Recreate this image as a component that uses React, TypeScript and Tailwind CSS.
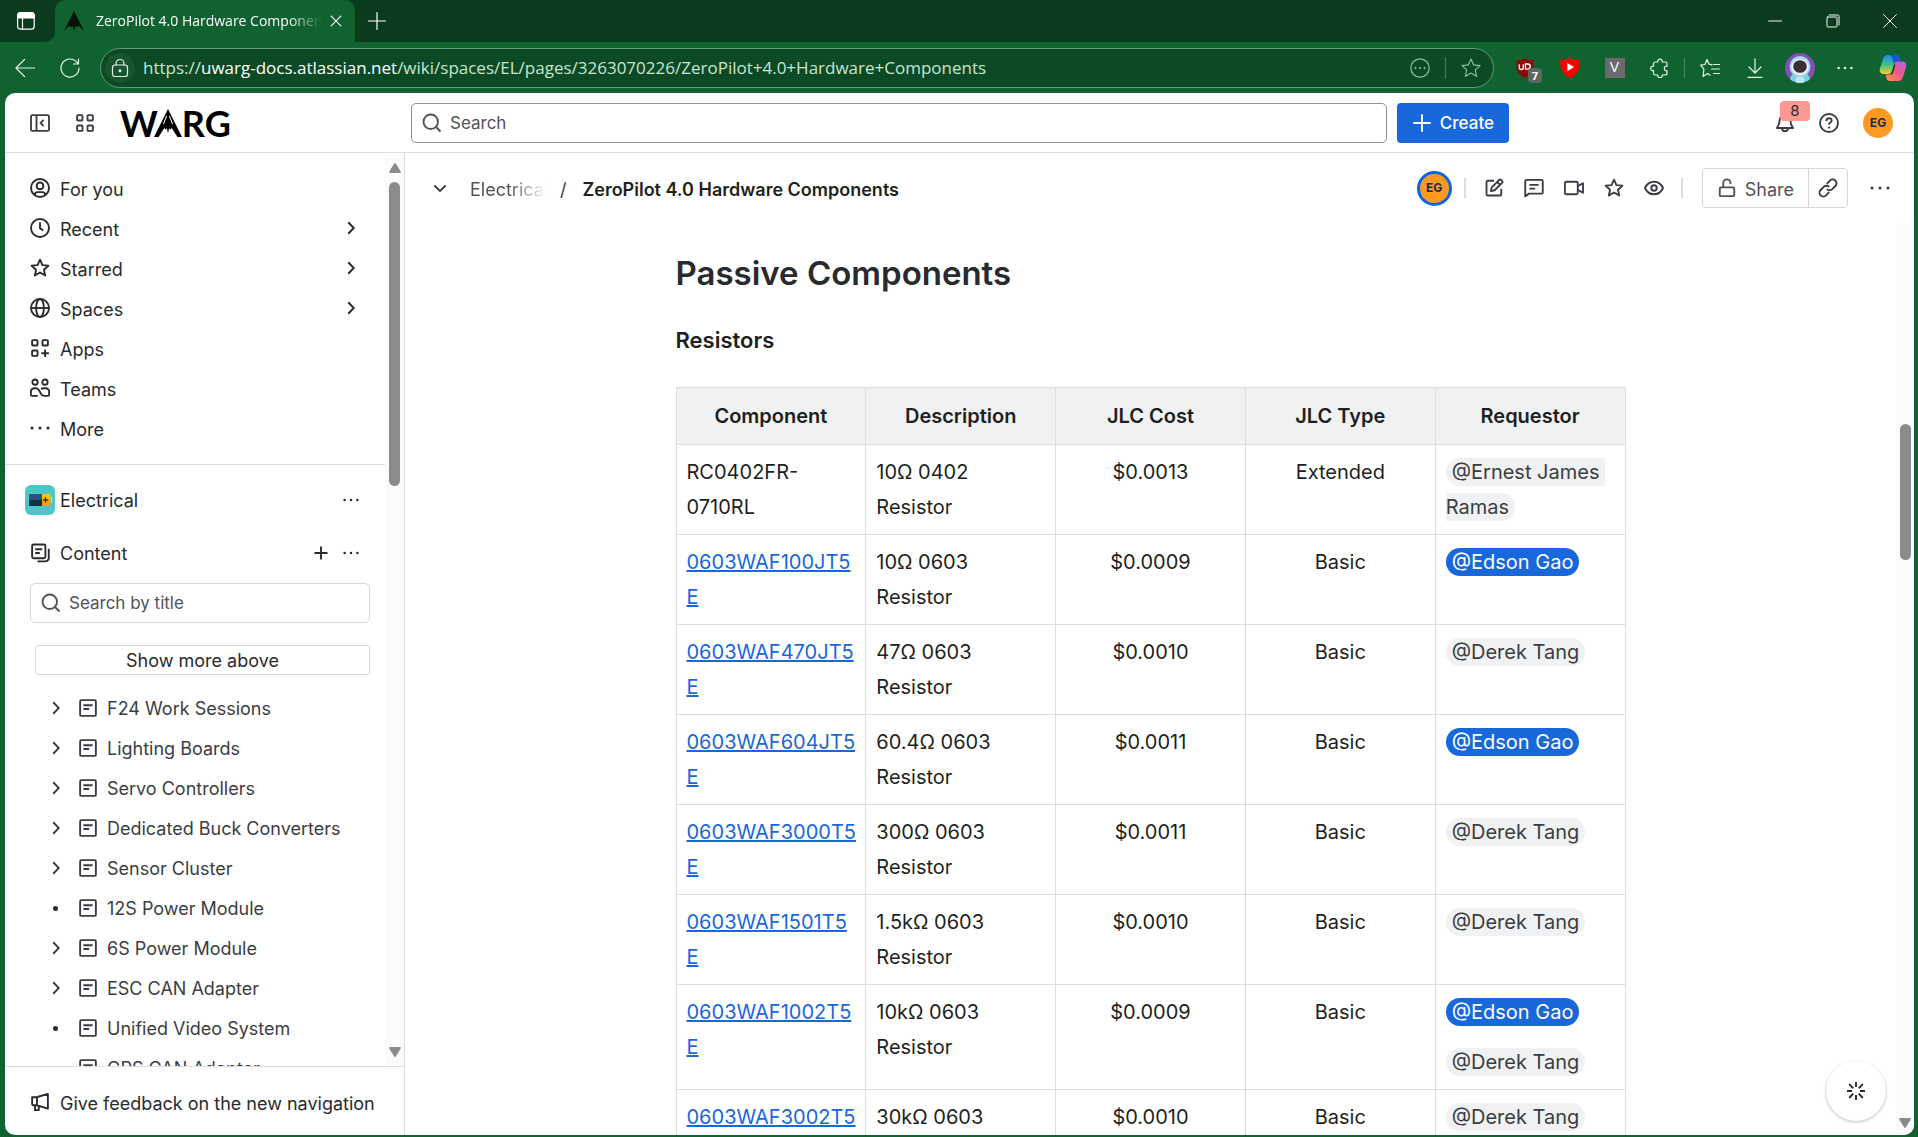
import type { ReactNode } from "react";

const STAR = "M8 1.3l1.95 4.35 4.75.5-3.55 3.2 1 4.7L8 11.65l-4.15 2.4 1-4.7L1.3 6.15l4.75-.5z";

function Icon({ children, size = "size-5", label }: { children: ReactNode; size?: string; label?: string }) {
  return (
    <svg
      viewBox="0 0 16 16"
      className={`${size} shrink-0`}
      fill="none"
      stroke="currentColor"
      strokeWidth="1.5"
      role={label ? "img" : undefined}
      aria-label={label}
      aria-hidden={label ? undefined : true}
    >
      {children}
    </svg>
  );
}

function Thin({ children, size = "size-5" }: { children: ReactNode; size?: string }) {
  return (
    <svg viewBox="0 0 20 20" className={`${size} shrink-0`} fill="none" stroke="currentColor" strokeWidth="1.2" strokeLinecap="round" strokeLinejoin="round" aria-hidden>
      {children}
    </svg>
  );
}

const Dots = ({ size = "size-5" }: { size?: string }) => (
  <Icon size={size}>
    <g fill="currentColor" stroke="none">
      <circle cx="1.6" cy="8" r="1.25" />
      <circle cx="8" cy="8" r="1.25" />
      <circle cx="14.4" cy="8" r="1.25" />
    </g>
  </Icon>
);

const ChevronRight = () => (
  <Icon>
    <path d="M5.8 3.4L10.2 8l-4.4 4.6" />
  </Icon>
);

const SearchIcon = () => (
  <Icon>
    <circle cx="7" cy="7" r="5.8" />
    <path d="M11.2 11.2l3.6 3.6" />
  </Icon>
);

const PageIcon = () => (
  <Icon>
    <rect x="1.7" y="1.7" width="12.6" height="12.6" rx="1" />
    <path d="M4.3 5.8h7.4M4.3 8.8h4.6" />
  </Icon>
);

const StarIcon = () => (
  <Icon>
    <path d={STAR} strokeLinejoin="round" />
  </Icon>
);

const navItems: { label: string; chevron?: boolean; icon: ReactNode }[] = [
  {
    label: "For you",
    icon: (
      <Icon>
        <circle cx="8" cy="8" r="7.2" />
        <circle cx="8" cy="6.3" r="2.7" />
        <path d="M3.8 13.6c.1-1.6.9-2.3 2.3-2.3h3.8c1.4 0 2.2.7 2.3 2.3" />
      </Icon>
    ),
  },
  {
    label: "Recent",
    chevron: true,
    icon: (
      <Icon>
        <circle cx="8" cy="8" r="7.2" />
        <path d="M8 3.3v4.9l2.5 1.7" />
      </Icon>
    ),
  },
  { label: "Starred", chevron: true, icon: <StarIcon /> },
  {
    label: "Spaces",
    chevron: true,
    icon: (
      <Icon>
        <circle cx="8" cy="8" r="7.2" />
        <ellipse cx="8" cy="8" rx="3.1" ry="7.2" />
        <path d="M.8 8h14.4" />
      </Icon>
    ),
  },
  {
    label: "Apps",
    icon: (
      <Icon>
        <rect x="1.7" y="1.7" width="4.3" height="4.3" rx=".6" />
        <rect x="10" y="1.7" width="4.3" height="4.3" rx=".6" />
        <rect x="1.7" y="10" width="4.3" height="4.3" rx=".6" />
        <path d="M12.1 9.2v6M9.1 12.2h6" />
      </Icon>
    ),
  },
  {
    label: "Teams",
    icon: (
      <Icon>
        <circle cx="4" cy="3.3" r="2.1" />
        <circle cx="12" cy="3.3" r="2.1" />
        <path d="M6.2 14.3H1.7a1 1 0 01-1-1V11a2.8 2.8 0 012.8-2.8h1.2c1.1 0 2 .6 2.5 1.600l1.700 3c.5.900 1.300 1.500 2.400 1.500h3a1 1 0 001-1V11a2.800 2.800 0 00-2.800-2.800H11c-.8 0-1.500.3-2 .9" />
      </Icon>
    ),
  },
  { label: "More", icon: <Dots /> },
];

const treeItems = [
  { label: "F24 Work Sessions", leaf: false },
  { label: "Lighting Boards", leaf: false },
  { label: "Servo Controllers", leaf: false },
  { label: "Dedicated Buck Converters", leaf: false },
  { label: "Sensor Cluster", leaf: false },
  { label: "12S Power Module", leaf: true },
  { label: "6S Power Module", leaf: false },
  { label: "ESC CAN Adapter", leaf: false },
  { label: "Unified Video System", leaf: true },
  { label: "GPS CAN Adapter", leaf: true },
];

const rows = [
  { part: "RC0402FR-0710RL", link: false, desc: "10Ω 0402 Resistor", cost: "$0.0013", type: "Extended", who: ["Ernest James Ramas"] },
  { part: "0603WAF100JT5E", link: true, desc: "10Ω 0603 Resistor", cost: "$0.0009", type: "Basic", who: ["Edson Gao"] },
  { part: "0603WAF470JT5E", link: true, desc: "47Ω 0603 Resistor", cost: "$0.0010", type: "Basic", who: ["Derek Tang"] },
  { part: "0603WAF604JT5E", link: true, desc: "60.4Ω 0603 Resistor", cost: "$0.0011", type: "Basic", who: ["Edson Gao"] },
  { part: "0603WAF3000T5E", link: true, desc: "300Ω 0603 Resistor", cost: "$0.0011", type: "Basic", who: ["Derek Tang"] },
  { part: "0603WAF1501T5E", link: true, desc: "1.5kΩ 0603 Resistor", cost: "$0.0010", type: "Basic", who: ["Derek Tang"] },
  { part: "0603WAF1002T5E", link: true, desc: "10kΩ 0603 Resistor", cost: "$0.0009", type: "Basic", who: ["Edson Gao", "Derek Tang"] },
  { part: "0603WAF3002T5E", link: true, desc: "30kΩ 0603 Resistor", cost: "$0.0010", type: "Basic", who: ["Derek Tang"] },
];

const columns = ["Component", "Description", "JLC Cost", "JLC Type", "Requestor"];

function Mention({ name }: { name: string }) {
  const self = name === "Edson Gao";
  return (
    <a
      href="#"
      className={`rounded-[20px] px-1.5 py-0.5 whitespace-pre-wrap ${self ? "bg-[#1868db] text-white" : "bg-[#f0f1f2] text-[#3b3d42]"}`}
    >
      @{name}
    </a>
  );
}

function TitleBar() {
  return (
    <div className="flex h-[42px] items-stretch bg-[#106230] text-white">
      <div className="flex w-[55px] items-center justify-center rounded-br-[10px] bg-[#0b3b1d]">
        <button aria-label="Tab actions menu" className="mr-1 flex">
          <Thin>
            <rect x="1.6" y="1.6" width="16.6" height="16.6" rx="3" />
            <path d="M1.6 4.6a3 3 0 013-3h10.6a3 3 0 013 3V7H1.6z" fill="currentColor" />
            <path d="M6.5 7v11" />
          </Thin>
        </button>
      </div>
      <div className="flex min-w-0 flex-1 bg-[#0b3b1d]">
        <div className="flex w-[300px] items-center rounded-t-[10px] bg-[#106230] pl-[9px]">
          <svg viewBox="0 0 20 20" className="size-5 shrink-0" aria-hidden>
            <path d="M10 0L20 20 14.5 14.5 12.8 16.5 11.5 15 10 20 8.5 15 7.2 16.5 5.5 14.5 0 20z" fill="#04120a" />
          </svg>
          <span className="ml-3 h-6 w-[226px] overflow-hidden mask-r-from-85% font-['Open_Sans','Noto_Sans',sans-serif] text-[14px] leading-6 whitespace-nowrap">
            ZeroPilot 4.0 Hardware Components
          </span>
          <button aria-label="Close tab" className="ml-1.5 flex">
            <Thin size="size-4">
              <path d="M4 4l12 12M16 4L4 16" strokeWidth="1.5" />
            </Thin>
          </button>
        </div>
        <button aria-label="New tab" className="ml-3 flex items-center">
          <Thin>
            <path d="M10 1.5v17M1.5 10h17" />
          </Thin>
        </button>
        <div className="ml-auto flex">
          <button aria-label="Minimize" className="flex w-[58px] items-center justify-center">
            <Thin size="size-4"><path d="M2 10h16" /></Thin>
          </button>
          <button aria-label="Restore" className="flex w-[58px] items-center justify-center">
            <Thin size="size-4">
              <rect x="2.5" y="5" width="12.5" height="12.5" rx="1" />
              <path d="M5 2.5h11a1.5 1.5 0 011.5 1.5v11" />
            </Thin>
          </button>
          <button aria-label="Close" className="flex w-14 items-center justify-center">
            <Thin size="size-4"><path d="M2 2l16 16M18 2L2 18" /></Thin>
          </button>
        </div>
      </div>
    </div>
  );
}

const toolCell = "flex w-[45px] shrink-0 items-center justify-center";

function AddressBar() {
  return (
    <div className="flex h-[51px] items-center text-[#e4f3e8]">
      <button aria-label="Back" className="ml-[15px] flex">
        <Thin><path d="M9.5 1.500L1 10l8.500 8.500M1 10h18.500" /></Thin>
      </button>
      <button aria-label="Refresh" className="ml-[25px] flex">
        <Thin>
          <path d="M19 10a9 9 0 11-3.500-7.100L18 5.500M18.500 1v5h-5" />
        </Thin>
      </button>
      <div className="ml-5 flex h-10 min-w-0 flex-1 items-center rounded-full border border-[#5f9a72] bg-[#0c4a25] pl-1">
        <button aria-label="View site information" className="flex size-[30px] shrink-0 items-center justify-center rounded-full bg-[#18552f]">
          <Thin>
            <rect x="2.5" y="7" width="15" height="11.5" rx="2.5" />
            <path d="M6 7V5.500a4 4 0 018 0V7" />
            <circle cx="10" cy="12.7" r=".9" fill="currentColor" />
          </Thin>
        </button>
        <div className="ml-2 min-w-0 flex-1 overflow-hidden font-['Open_Sans','Noto_Sans',sans-serif] text-[17px] leading-6 whitespace-nowrap text-[#c9e6d0]">
          https://<span className="text-white">uwarg-docs.atlassian.net</span>/wiki/spaces/EL/pages/3263070226/ZeroPilot+4.0+Hardware+Components
        </div>
        <button aria-label="Page actions" className="flex text-[#8fbd9d]">
          <Thin>
            <circle cx="10" cy="10" r="9.2" />
            <g fill="currentColor" stroke="none">
              <circle cx="5.5" cy="10" r="1" />
              <circle cx="10" cy="10" r="1" />
              <circle cx="14.5" cy="10" r="1" />
            </g>
          </Thin>
        </button>
        <span className="mx-[15px] h-[22px] w-px bg-[#4b7f4f]" />
        <button aria-label="Add to favorites" className="mr-3 flex text-[#8fbd9d]">
          <Thin><path d="M10 1l2.700 5.900 6.300.7-4.700 4.300 1.300 6.400L10 15.100l-5.600 3.200 1.300-6.400L1 7.600l6.300-.7z" /></Thin>
        </button>
      </div>
      <div className="ml-2 flex h-full items-center">
        <button aria-label="uBlock Origin, 7 blocked" className={`${toolCell} relative`}>
          <svg viewBox="0 0 20 20" className="size-5" aria-hidden>
            <path d="M10 0c2.500 1.500 5 2.200 8.500 2.200V10c0 4.500-4 7.500-8.500 10C5.500 17.500 1.500 14.500 1.500 10V2.200C5 2.200 7.500 1.500 10 0z" fill="#8a0a0a" />
            <path d="M4.300 6.200v3.300a2 2 0 004 0V6.200" stroke="#fff" strokeWidth="1.3" fill="none" />
            <path d="M10.500 6h2.200a2.500 2.500 0 010 5.200h-2.200z" stroke="#fff" strokeWidth="1.3" fill="none" />
          </svg>
          <span className="absolute top-2.5 left-[26px] h-[15px] w-3.5 rounded bg-[#5f6763] text-center font-['Open_Sans',sans-serif] text-[11px] leading-[15px] font-bold text-white">7</span>
        </button>
        <button aria-label="YouTube extension" className={toolCell}>
          <svg viewBox="0 0 20 20" className="size-5" aria-hidden>
            <path d="M10 0c3 1.600 6 2 9.700 2 .3 4-.2 7.500-1.700 10.500S14 18.200 10 20c-4-1.800-6.500-4.500-8-7.500S0 6 .3 2C4 2 7 1.600 10 0z" fill="#f00" />
            <path d="M7.3 5v8.200L14 9.100z" fill="#fff" />
          </svg>
        </button>
        <button aria-label="V extension" className={toolCell}>
          <span className="flex size-5 items-center justify-center bg-[#6b6b6b] font-['Liberation_Sans',sans-serif] text-[14px] text-white">V</span>
        </button>
        <button aria-label="Extensions" className={toolCell}>
          <Thin>
            <path d="M5.500 4h2.300a2.300 2.300 0 114.500 0h2.700a2 2 0 012 2v2.200h-.8a2.400 2.400 0 000 4.700h.8V15a2 2 0 01-2 2h-2.700a2.300 2.300 0 11-4.500 0H5.500a2 2 0 01-2-2v-2.300a2.300 2.300 0 110-4.500V6a2 2 0 012-2z" />
          </Thin>
        </button>
        <span className="mx-[2px] h-5 w-px bg-[#4f8b61]" />
        <button aria-label="Favorites" className={toolCell}>
          <Thin><path d="M12 6.800L9 6.200 7 1.500 5 6.500.7 7.200l3.200 4L3 18.500l4.500-3 2.500 1.700M13.500 6.500h6M11.500 11h8M13.500 15.500h6" /></Thin>
        </button>
        <button aria-label="Downloads" className={toolCell}>
          <Thin><path d="M10 .8v14M4 9l6 6 6-6M3 19.300h14" /></Thin>
        </button>
        <button aria-label="Profile" className={toolCell}>
          <svg viewBox="0 0 30 30" className="size-[30px]" aria-hidden>
            <circle cx="15" cy="15" r="15" fill="#8250b4" />
            <path d="M5 26c1-5 5-7 10-7s9 2 10 7a15 15 0 01-20 0z" fill="#7fd0e0" />
            <path d="M11 24h8v5.400a15 15 0 01-8 0z" fill="#bdeaf2" />
            <circle cx="15" cy="13.500" r="10.500" fill="#a9d6ee" />
            <ellipse cx="15" cy="14" rx="8.500" ry="8" fill="#eef6fb" />
            <ellipse cx="15" cy="13.500" rx="6.800" ry="6.300" fill="#3a2f33" />
          </svg>
        </button>
        <button aria-label="Settings and more" className={toolCell}>
          <Dots size="size-4" />
        </button>
        <button aria-label="Copilot" className="flex w-[51px] items-center justify-center">
          <svg viewBox="0 0 28 28" className="size-7" aria-hidden>
            <defs>
              <linearGradient id="cpA" x1="0" y1="0" x2="0" y2="1">
                <stop offset="0" stopColor="#1a8ef0" />
                <stop offset=".5" stopColor="#3cc08a" />
                <stop offset="1" stopColor="#f5cf2b" />
              </linearGradient>
              <linearGradient id="cpB" x1="1" y1="0" x2="0" y2="1">
                <stop offset="0" stopColor="#b25cf0" />
                <stop offset=".5" stopColor="#f2588a" />
                <stop offset="1" stopColor="#ff9a3c" />
              </linearGradient>
            </defs>
            <path d="M9 1h8c2 0 3 1.200 3.600 3L21.500 7h-3c-1.800 0-2.700 1-3.200 2.700L13 17c-.6 2-1.700 3-3.600 3H4.500C1.500 20 0 17.500 1 14L4 5c.9-2.700 2.400-4 5-4z" fill="url(#cpA)" />
            <path d="M17 1c2 0 3 1.200 3.600 3L21.500 7h-3c-1.800 0-2.700 1-3.200 2.700L15 10.500 13 4c-.5-1.600-1.300-3-3-3z" fill="#1b55d8" />
            <path d="M19 27h-8c-2 0-3-1.200-3.600-3L6.500 20.500h3c1.800 0 2.700-1 3.200-2.700L15 10.500c.6-2 1.700-3 3.600-3h4.900c3 0 4.500 2.500 3.500 6L24 23c-.9 2.700-2.400 4-5 4z" fill="url(#cpB)" />
            <path d="M16.500 10.500h-1.400l-2.400 7.300c-.4 1.300-1 2.200-2 2.600h1.500c1 0 1.600-.6 2-1.900z" fill="#0d4a24" />
          </svg>
        </button>
      </div>
    </div>
  );
}

function TopNav() {
  return (
    <header className="flex h-[60px] shrink-0 items-center border-b border-[#dddee1] text-[#3b3d45]">
      <div className="flex w-[406px] shrink-0 items-center pl-[25px]">
        <button aria-label="Collapse sidebar" className="flex">
          <Icon>
            <rect x=".8" y="1.7" width="14.4" height="12.6" rx="1.2" />
            <path d="M5.2 1.700v12.600M10.800 5.500L8.500 8l2.300 2.500" />
          </Icon>
        </button>
        <button aria-label="App switcher" className="ml-[25px] flex">
          <Icon>
            <rect x="1.7" y="1.7" width="4.3" height="4.3" rx=".6" />
            <rect x="10" y="1.7" width="4.3" height="4.3" rx=".6" />
            <rect x="1.7" y="10" width="4.3" height="4.3" rx=".6" />
            <rect x="10" y="10" width="4.3" height="4.3" rx=".6" />
          </Icon>
        </button>
        <a href="#" aria-label="WARG home" className="ml-[25px] flex h-9 items-center font-['Lato',sans-serif] text-[36px] leading-9 font-bold text-black">
          <span>W</span>
          <svg viewBox="0 0 28 28" className="-ml-1 size-7" aria-hidden>
            <path d="M14 0L28 28h-4.500l-5.800-9-1.200 1.500-1.200-1.200L14 24l-1.300-4.700-1.200 1.200-1.200-1.500-5.800 9H0z" fill="#000" />
            <path d="M12.6 7L9.500 15M15.400 7l3.100 8" stroke="#fff" strokeWidth="1" />
          </svg>
          <span>RG</span>
        </a>
      </div>
      <label className="flex h-10 min-w-0 flex-1 items-center rounded-[5px] border border-[#8c8f97] pl-2.5 text-[#505258]">
        <SearchIcon />
        <input aria-label="Search" placeholder="Search" className="ml-2 min-w-0 flex-1 pt-0.5 text-[17px] outline-none placeholder:text-[#505258]" />
      </label>
      <button className="ml-2.5 flex h-10 items-center gap-2 rounded bg-[#1868db] px-[15px] text-[17px] font-medium text-white">
        <Icon><path d="M8 1v14M1 8h14" /></Icon>
        <span className="pt-0.5">Create</span>
      </button>
      <div className="flex w-[405px] shrink-0 items-center justify-end gap-6 pr-[21px]">
        <button aria-label="Notifications, 8 unread" className="relative flex">
          <Icon>
            <path d="M8 1.500a4.300 4.300 0 00-4.300 4.300c0 3-1 4.700-2.200 6.200h13c-1.200-1.500-2.200-3.200-2.200-6.200A4.300 4.300 0 008 1.500z" strokeLinejoin="round" />
            <path d="M5.700 12.300a2.300 2.300 0 004.600 0" />
          </Icon>
          <span className="absolute -top-3 left-[5px] h-5 w-[30px] rounded-sm bg-[#fd9891] text-center text-[15px] leading-5 text-[#292a2e]">8</span>
        </button>
        <button aria-label="Help" className="flex">
          <Icon>
            <circle cx="8" cy="8" r="7.2" />
            <path d="M5.900 6.300C5.900 5 6.800 4.200 8 4.200s2.100.8 2.100 1.900C10.100 7.500 8 7.600 8 9.300" />
            <circle cx="8" cy="11.6" r=".9" fill="currentColor" stroke="none" />
          </Icon>
        </button>
        <button aria-label="Your profile" className="flex size-[30px] items-center justify-center rounded-full bg-[#ff991f] text-[12px] font-bold text-[#172b4d]">
          EG
        </button>
      </div>
    </header>
  );
}

function Arrow({ up = false }: { up?: boolean }) {
  return (
    <svg viewBox="0 0 12 10" className="h-2.5 w-3" fill="#8b8b8b" aria-hidden>
      {up ? <path d="M6 0q.6 0 1 .7l4.600 7.500Q12.300 10 11 10H1Q-.3 10 .4 8.200L5 .7Q5.400 0 6 0z" /> : <path d="M6 10q-.6 0-1-.7L.4 1.800Q-.3 0 1 0h10q1.300 0 .6 1.800L7 9.300q-.4.700-1 .7z" />}
    </svg>
  );
}

function Sidebar() {
  return (
    <aside className="flex w-[400px] shrink-0 flex-col border-r border-[#dddee1] text-[18px] text-[#292a2e]">
      <div className="flex min-h-0 flex-1">
        <div className="min-w-0 flex-1 overflow-hidden">
          <nav aria-label="Main" className="border-b border-[#dddee1] pt-[15px] pb-4">
            {navItems.map((item) => (
              <button key={item.label} className="flex h-10 w-full items-center gap-2.5 pr-6 pl-[25px] text-left">
                {item.icon}
                <span className="flex-1 pt-0.5">{item.label}</span>
                {item.chevron && <ChevronRight />}
              </button>
            ))}
          </nav>
          <div className="mt-[15px] flex h-10 items-center pr-[26px] pl-5">
            <svg viewBox="0 0 30 30" className="size-[30px]" aria-hidden>
              <rect width="30" height="30" rx="6" fill="#4bc7c7" />
              <path d="M4 10q0-1 1-1h12v6H4z" fill="#2c5282" />
              <path d="M4 15h13v6H5q-1 0-1-1z" fill="#123047" />
              <path d="M17 9h7q1.500 0 1.500 1.500v4.500H17z" fill="#ffc400" />
              <path d="M17 15h8.500v4.500q0 1.500-1.500 1.500h-7z" fill="#ff991f" />
              <path d="M26 12h.7v6H26z" fill="#e6fcff" />
              <path d="M20.500 12v5.500M17.800 14.800h5.500" stroke="#123047" strokeWidth="1.2" />
            </svg>
            <a href="#" className="ml-[5px] flex-1">Electrical</a>
            <button aria-label="Space actions" className="flex"><Dots size="size-4" /></button>
          </div>
          <div className="mt-[13px] flex h-10 items-center pr-[26px] pl-[25px]">
            <Icon>
              <rect x="1.7" y="1.2" width="10.6" height="11" rx="1.2" />
              <path d="M4.200 5h5.600M4.200 8h3.600M15 4.500V12a2.700 2.700 0 01-2.700 2.700H6" />
            </Icon>
            <a href="#" className="ml-2.5 flex-1">Content</a>
            <button aria-label="Create content" className="mr-3 flex">
              <Icon><path d="M8 2.800v10.400M2.800 8h10.400" /></Icon>
            </button>
            <button aria-label="Content actions" className="flex"><Dots size="size-4" /></button>
          </div>
          <label className="mt-2.5 mr-[15px] ml-[25px] flex h-10 items-center rounded-[5px] border border-[#d5d6da] pl-2.5 text-[#505258]">
            <SearchIcon />
            <input aria-label="Search by title" placeholder="Search by title" className="ml-2 min-w-0 flex-1 pt-0.5 text-[17px] outline-none placeholder:text-[#505258]" />
          </label>
          <div className="mt-[22px] mr-[15px] ml-[30px] flex">
            <button className="h-[30px] flex-1 rounded-[3px] border border-[#d5d6da] pt-0.5 leading-6">Show more above</button>
          </div>
          <ul className="mt-[13px] text-[#3b3d42]">
            {treeItems.map((item) => (
              <li key={item.label} className="flex h-10 items-center pl-[41px]">
                {item.leaf ? (
                  <span className="flex w-5 justify-center">
                    <span className="mr-0.5 size-[5px] rounded-full bg-[#292a2e]" />
                  </span>
                ) : (
                  <button aria-label={`Expand ${item.label}`} className="flex"><ChevronRight /></button>
                )}
                <a href="#" className="ml-3 flex items-center gap-[9px]">
                  <PageIcon />
                  <span>{item.label}</span>
                </a>
              </li>
            ))}
          </ul>
        </div>
        <div className="flex w-[19px] flex-col items-center justify-between bg-[#fbfbfb] pt-2.5 pb-[9px]">
          <div className="flex flex-col items-center gap-[9px]">
            <Arrow up />
            <div className="h-[304px] w-[11px] rounded-full bg-[#8b8b8b]" />
          </div>
          <Arrow />
        </div>
      </div>
      <button className="flex h-[69px] shrink-0 items-center gap-2.5 border-t border-[#dddee1] pt-0.5 pl-[25px] text-left whitespace-nowrap">
        <Icon>
          <path d="M1.700 4.200h3.500L14.300 1.500v11.800L5.200 10.600H2.700a1 1 0 01-1-1zM5.600 4.200v6.400M4 10.700v3.800h3v-3.300" strokeLinejoin="round" />
        </Icon>
        <span className="pt-0.5">Give feedback on the new navigation</span>
      </button>
    </aside>
  );
}

function PageHeader() {
  return (
    <div className="flex h-[70px] shrink-0 items-center pr-6 pl-[25px] text-[18px] text-[#3b3d45]">
      <button aria-label="Show breadcrumbs" className="flex">
        <Icon><path d="M3.500 6L8 10.300 12.500 6" /></Icon>
      </button>
      <nav aria-label="Breadcrumbs" className="flex items-center pt-0.5">
        <a href="#" className="ml-5 w-[76px] overflow-hidden mask-r-from-50% whitespace-nowrap text-[#505258]">Electrical</a>
        <span className="ml-3.5">/</span>
        <h1 className="ml-4 font-semibold whitespace-nowrap text-[#1e1f21]">ZeroPilot 4.0 Hardware Components</h1>
      </nav>
      <div className="ml-auto flex items-center">
        <span className="flex size-[35px] items-center justify-center rounded-full border-[3px] border-[#0c66e4] bg-[#ff991f] text-[12px] font-bold text-[#172b4d]">EG</span>
        <span className="mr-[18px] ml-3 h-5 w-0.5 bg-[#dddee1]" />
        <div className="flex gap-5">
          <button aria-label="Edit" className="flex">
            <Icon>
              <path d="M8 2.200H3a1 1 0 00-1 1V13a1 1 0 001 1h9.800a1 1 0 001-1V8.500" />
              <path d="M5.500 10.500l.7-3L12.300 1.400a.9.900 0 011.200 0l1.100 1.100a.9.900 0 010 1.200L8.500 9.800zM10.600 3.200l2.200 2.200" strokeLinejoin="round" />
            </Icon>
          </button>
          <button aria-label="Comments" className="flex">
            <Icon>
              <path d="M1 14.700V2.500a1 1 0 011-1h12a1 1 0 011 1v9a1 1 0 01-1 1H4z" strokeLinejoin="round" />
              <path d="M4.300 5.500h7.400M4.300 8.500h4.600" />
            </Icon>
          </button>
          <button aria-label="Record video" className="flex">
            <Icon>
              <rect x=".7" y="3" width="10.3" height="10" rx="1.2" />
              <path d="M11 6.500l4.200-2.300v7.600L11 9.500" strokeLinejoin="round" />
            </Icon>
          </button>
          <button aria-label="Star" className="flex"><StarIcon /></button>
          <button aria-label="Watch" className="flex">
            <Icon>
              <path d="M.8 8C2.200 4.800 4.800 3 8 3s5.800 1.800 7.200 5C13.800 11.200 11.200 13 8 13S2.200 11.200.8 8z" />
              <circle cx="8" cy="8" r="2.2" />
            </Icon>
          </button>
        </div>
        <span className="mr-[19px] ml-[17px] h-5 w-0.5 bg-[#dddee1]" />
        <div className="flex h-10 rounded border border-[#d5d6da]">
          <button className="flex items-center gap-2 border-r border-[#d5d6da] px-3.5 text-[#505258]">
            <Icon>
              <rect x="2.2" y="7.5" width="11.6" height="7" rx="1" />
              <path d="M5 7.500V4a2.900 2.900 0 015.800 0v.8" />
            </Icon>
            <span className="pt-0.5">Share</span>
          </button>
          <button aria-label="Copy link" className="flex w-[38px] items-center justify-center">
            <Icon>
              <path d="M7 4.700l2.600-2.600a3 3 0 014.300 4.300l-2.500 2.500a3 3 0 01-4.300 0M9 11.300l-2.600 2.600a3 3 0 01-4.300-4.300l2.500-2.500a3 3 0 014.300 0" />
            </Icon>
          </button>
        </div>
        <button aria-label="More actions" className="ml-[22px] flex"><Dots /></button>
      </div>
    </div>
  );
}

function Content() {
  return (
    <div className="flex min-h-0 flex-1">
      <article className="min-w-0 flex-1 overflow-hidden text-[20px] text-[#1e1f21]">
        <div className="mx-auto max-w-[950px]">
          <h2 className="mt-[30px] text-[33px] leading-10 font-semibold text-[#292a2e]">Passive Components</h2>
          <h3 className="mt-8 text-[22px] leading-[30px] font-semibold">Resistors</h3>
          <table className="mt-8 w-full table-fixed border-collapse leading-[35px]">
            <thead>
              <tr>
                {columns.map((c) => (
                  <th key={c} scope="col" className="h-[57px] border border-[#dddee1] bg-[#f0f1f2] p-0 font-semibold">{c}</th>
                ))}
              </tr>
            </thead>
            <tbody>
              {rows.map((r) => (
                <tr key={r.part} className="align-top">
                  <td className="border border-[#dddee1] pt-2.5 pr-2 pb-[9px] pl-2.5 wrap-break-word">
                    {r.link ? <a href="#" className="text-[#1868db] underline">{r.part}</a> : r.part}
                  </td>
                  <td className="border border-[#dddee1] px-2.5 pt-2.5 pb-[9px]">{r.desc}</td>
                  <td className="border border-[#dddee1] px-2.5 pt-2.5 pb-[9px] text-center">{r.cost}</td>
                  <td className="border border-[#dddee1] px-2.5 pt-2.5 pb-[9px] text-center">{r.type}</td>
                  <td className="space-y-[15px] border border-[#dddee1] px-2.5 pt-2.5 pb-[9px]">
                    {r.who.map((w) => (
                      <p key={w}><Mention name={w} /></p>
                    ))}
                  </td>
                </tr>
              ))}
            </tbody>
          </table>
        </div>
      </article>
      <div className="flex w-[18px] shrink-0 flex-col items-center justify-between bg-[#fbfbfb] pt-[201px] pb-[7px]">
        <div className="h-[136px] w-[11px] rounded-full bg-[#8b8b8b]" />
        <Arrow />
      </div>
    </div>
  );
}

export default function App() {
  return (
    <div className="flex h-screen flex-col overflow-hidden bg-[#106230] font-['Inter',sans-serif]">
      <TitleBar />
      <AddressBar />
      <div className="relative mr-1 mb-0.5 ml-[5px] flex min-h-0 flex-1 flex-col overflow-hidden rounded-[10px] bg-white">
        <TopNav />
        <div className="flex min-h-0 flex-1">
          <Sidebar />
          <main className="flex min-w-0 flex-1 flex-col">
            <PageHeader />
            <Content />
          </main>
        </div>
        <button aria-label="Open assistant" className="absolute right-7 bottom-3.5 flex size-[60px] items-center justify-center rounded-full bg-white text-[#292a2e] shadow-[0_1px_3px_rgba(30,31,33,0.3)]">
          <Icon>
            <path d="M8 .8v4M8 11.200v4M.8 8h4M11.200 8h4M2.500 2.500l3.300 3.300M10.200 10.200l3.300 3.300M13.500 2.500l-3.300 3.300M5.800 10.200l-3.300 3.300" />
          </Icon>
        </button>
      </div>
    </div>
  );
}
